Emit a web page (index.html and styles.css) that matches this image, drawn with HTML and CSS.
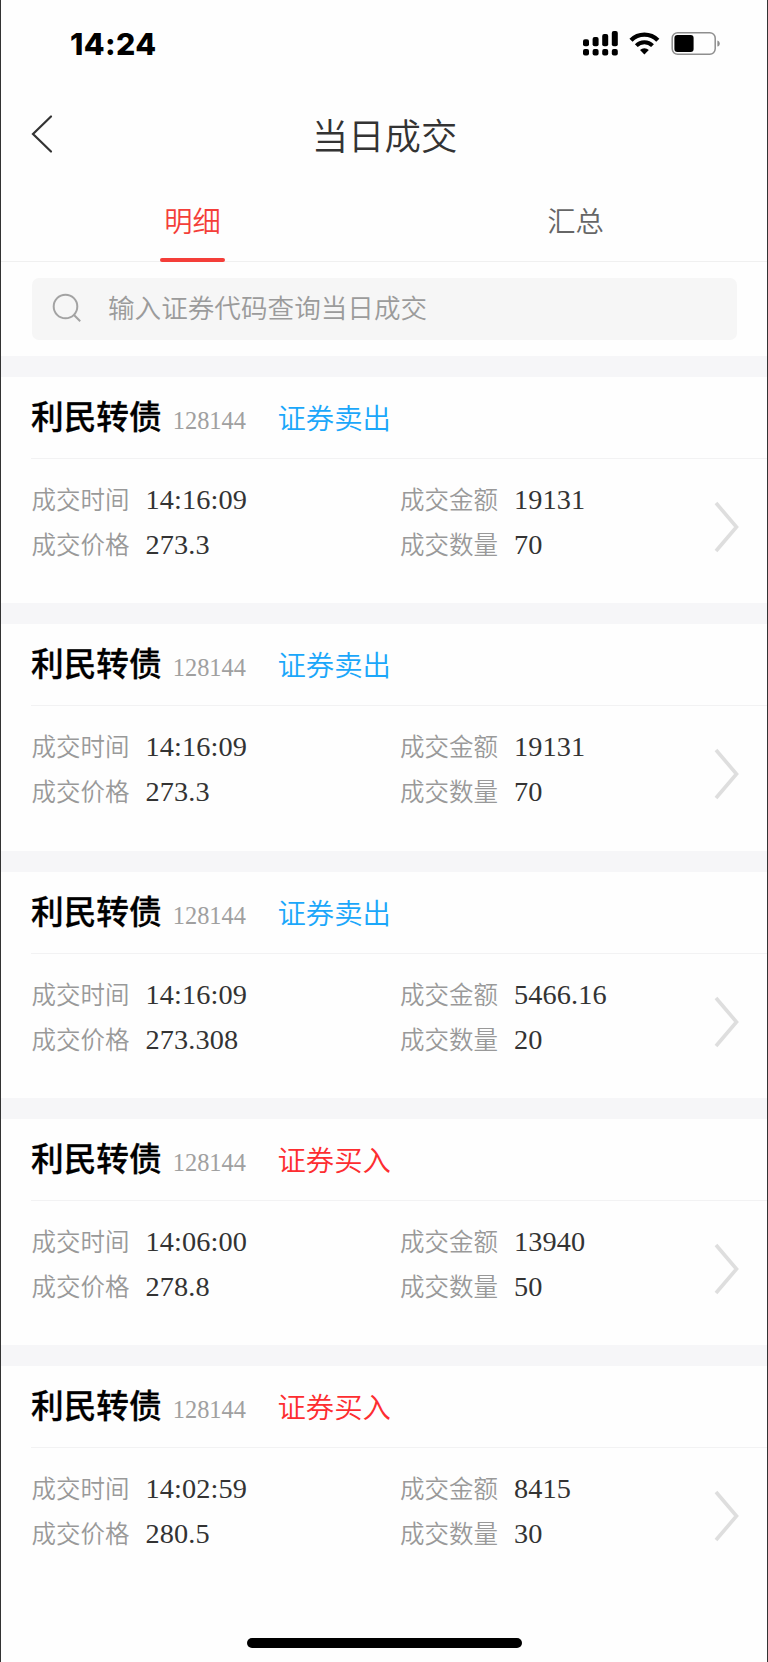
FILE: index.html
```html
<!DOCTYPE html>
<html lang="zh-CN">
<head>
  <meta charset="UTF-8">
  <title>当日成交</title>
  <link rel="stylesheet" href="styles.css">
</head>
<body>

<div class="status-bar">
  <span class="time">14:24</span>
  <svg class="status-icons" width="138" height="26" viewBox="0 0 138 26">
    <!-- signal -->
    <rect x="0" y="8.2" width="6" height="7" rx="2"/>
    <rect x="9.6" y="6" width="6" height="9.2" rx="2"/>
    <rect x="19.2" y="3" width="6" height="12.2" rx="2"/>
    <rect x="28.8" y="0" width="6" height="15.2" rx="2"/>
    <rect x="0" y="18" width="6" height="6.6" rx="2"/>
    <rect x="9.6" y="18" width="6" height="6.6" rx="2"/>
    <rect x="19.2" y="18" width="6" height="6.6" rx="2"/>
    <rect x="28.8" y="18" width="6" height="6.6" rx="2"/>
    <!-- wifi -->
    <path d="M48 9.2a18.8 18.8 0 0 1 26.8 0" fill="none" stroke="#000" stroke-width="4.4"/>
    <path d="M53.3 14.6a11.4 11.4 0 0 1 16.2 0" fill="none" stroke="#000" stroke-width="4"/>
    <path d="M61.4 23.4l-4.4-4.4a6.3 6.3 0 0 1 8.800 0z"/>
    <!-- battery -->
    <rect x="89.2" y="1.7" width="43" height="21.6" rx="5.5" fill="none" stroke="#8e8e8e" stroke-width="1.5"/>
    <rect x="91.4" y="4" width="19.2" height="17" rx="3"/>
    <path d="M134.4 9.4c3.2 1 3.2 5.2 0 6.2z" fill="#8e8e8e"/>
  </svg>
</div>

<header>
  <svg class="back" width="24" height="40" viewBox="0 0 24 40">
    <path d="M20 2.500L2 20l18 17.500"/>
  </svg>
  <h1>当日成交</h1>
</header>

<div class="tabs">
  <div class="tab active"><span>明细</span></div>
  <div class="tab"><span>汇总</span></div>
</div>

<div class="search-wrap">
  <div class="search">
    <svg width="30" height="30" viewBox="0 0 30 30">
      <circle cx="13.500" cy="13.500" r="11.800"/>
      <path d="M22 22l6.200 6.200"/>
    </svg>
    <span>输入证券代码查询当日成交</span>
  </div>
</div>

<div class="list">
  <div class="deal">
    <div class="deal-head">
      <span class="name">利民转债</span><span class="code">128144</span><span class="type sell">证券卖出</span>
    </div>
    <div class="deal-body">
      <div class="fields">
        <div><label>成交时间</label><b>14:16:09</b></div>
        <div><label>成交金额</label><b>19131</b></div>
        <div><label>成交价格</label><b>273.3</b></div>
        <div><label>成交数量</label><b>70</b></div>
      </div>
      <svg class="arrow" width="26" height="52" viewBox="0 0 26 52"><path d="M3 2L23.500 26 3 50"/></svg>
    </div>
  </div>

  <div class="deal">
    <div class="deal-head">
      <span class="name">利民转债</span><span class="code">128144</span><span class="type sell">证券卖出</span>
    </div>
    <div class="deal-body">
      <div class="fields">
        <div><label>成交时间</label><b>14:16:09</b></div>
        <div><label>成交金额</label><b>19131</b></div>
        <div><label>成交价格</label><b>273.3</b></div>
        <div><label>成交数量</label><b>70</b></div>
      </div>
      <svg class="arrow" width="26" height="52" viewBox="0 0 26 52"><path d="M3 2L23.500 26 3 50"/></svg>
    </div>
  </div>

  <div class="deal">
    <div class="deal-head">
      <span class="name">利民转债</span><span class="code">128144</span><span class="type sell">证券卖出</span>
    </div>
    <div class="deal-body">
      <div class="fields">
        <div><label>成交时间</label><b>14:16:09</b></div>
        <div><label>成交金额</label><b>5466.16</b></div>
        <div><label>成交价格</label><b>273.308</b></div>
        <div><label>成交数量</label><b>20</b></div>
      </div>
      <svg class="arrow" width="26" height="52" viewBox="0 0 26 52"><path d="M3 2L23.500 26 3 50"/></svg>
    </div>
  </div>

  <div class="deal">
    <div class="deal-head">
      <span class="name">利民转债</span><span class="code">128144</span><span class="type buy">证券买入</span>
    </div>
    <div class="deal-body">
      <div class="fields">
        <div><label>成交时间</label><b>14:06:00</b></div>
        <div><label>成交金额</label><b>13940</b></div>
        <div><label>成交价格</label><b>278.8</b></div>
        <div><label>成交数量</label><b>50</b></div>
      </div>
      <svg class="arrow" width="26" height="52" viewBox="0 0 26 52"><path d="M3 2L23.500 26 3 50"/></svg>
    </div>
  </div>

  <div class="deal">
    <div class="deal-head">
      <span class="name">利民转债</span><span class="code">128144</span><span class="type buy">证券买入</span>
    </div>
    <div class="deal-body">
      <div class="fields">
        <div><label>成交时间</label><b>14:02:59</b></div>
        <div><label>成交金额</label><b>8415</b></div>
        <div><label>成交价格</label><b>280.5</b></div>
        <div><label>成交数量</label><b>30</b></div>
      </div>
      <svg class="arrow" width="26" height="52" viewBox="0 0 26 52"><path d="M3 2L23.500 26 3 50"/></svg>
    </div>
  </div>
</div>

<div class="home-bar"></div>

</body>
</html>
```
FILE: styles.css
```css
* {
  box-sizing: border-box;
}

body {
  margin: 0;
  height: 1662px;
  overflow: hidden;
  display: flex;
  flex-direction: column;
  background: #fefefe;
  border-left: 1px solid #333;
  border-right: 1px solid #333;
  font-family: "Noto Sans CJK SC", sans-serif;
  font-weight: 350;
  color: #333;
}

.status-bar {
  height: 90px;
  padding: 31px 46.2px 0 69px;
  display: flex;
  justify-content: space-between;
  align-items: flex-start;
}

.time {
  font: 800 30.3px/26px Inter, sans-serif;
  letter-spacing: 0.4px;
  color: #000;
}

header {
  height: 90px;
  padding-left: 30px;
  display: flex;
  align-items: center;
}

.back {
  margin-top: -3px;
  fill: none;
  stroke: #333;
  stroke-width: 2.2;
  stroke-linecap: round;
}

h1 {
  flex: 1;
  margin: -2px 53px 0 0;
  text-align: center;
  font-size: 36.4px;
  font-weight: 350;
  line-height: 50px;
}

.tabs {
  height: 82px;
  display: flex;
  border-bottom: 1px solid #f0f0f0;
}

.tab {
  flex: 1;
  display: flex;
  justify-content: center;
  font-size: 28.3px;
  line-height: 79px;
  color: #666;
}

.tab span {
  padding: 0 4.4px;
}

.tab.active {
  color: #f43e39;
}

.tab.active span {
  position: relative;
}

.tab.active span::after {
  content: "";
  position: absolute;
  left: 0;
  right: 0;
  bottom: -1px;
  height: 4px;
  border-radius: 2px;
  background: #f43e39;
}

.search-wrap {
  height: 94px;
  padding: 16px 30px 0 30.5px;
}

.search {
  height: 62px;
  padding-left: 20px;
  display: flex;
  align-items: center;
  border-radius: 7px;
  background: #f6f6f6;
  color: #9b9b9b;
  font-size: 26.6px;
}

.search svg {
  margin: 0 26.5px 2px 0;
  fill: none;
  stroke: #a3a3a3;
  stroke-width: 2;
}

.search span {
  line-height: 60px;
  margin-top: -5px;
}

.deal {
  height: 247.3px;
  border-top: 21px solid #f6f6f8;
}

.deal-head {
  height: 82px;
  margin-left: 30px;
  display: flex;
  align-items: baseline;
  border-bottom: 1px solid #f2f2f3;
  line-height: 75px;
}

.name {
  font-size: 32.7px;
  font-weight: 500;
  color: #000;
  -webkit-text-stroke: 0.3px #000;
}

.code {
  margin: 0 31.5px 0 11px;
  font-family: "Liberation Serif", serif;
  font-size: 24.4px;
  color: #a0a0a0;
}

.type {
  font-size: 28.4px;
}

.sell {
  color: #1ba7fa;
}

.buy {
  color: #fd2d30;
}

.deal-body {
  padding: 17px 28.5px 0 30.5px;
  display: flex;
  align-items: center;
}

.fields {
  flex: 1;
  display: grid;
  grid-template-columns: 368.5px 1fr;
  grid-auto-rows: 45px;
}

.fields div {
  display: flex;
  align-items: baseline;
  line-height: 45px;
}

.fields label {
  width: 114px;
  font-size: 24.5px;
  color: #999;
}

.fields b {
  font-family: "Liberation Serif", serif;
  font-size: 28.3px;
  font-weight: 400;
  letter-spacing: 0.1px;
}

.arrow {
  margin-top: 12px;
  fill: none;
  stroke: #dedede;
  stroke-width: 3.6;
}

.home-bar {
  width: 275px;
  height: 10px;
  margin: auto auto 14px;
  flex: none;
  border-radius: 5px;
  background: #000;
}
```
